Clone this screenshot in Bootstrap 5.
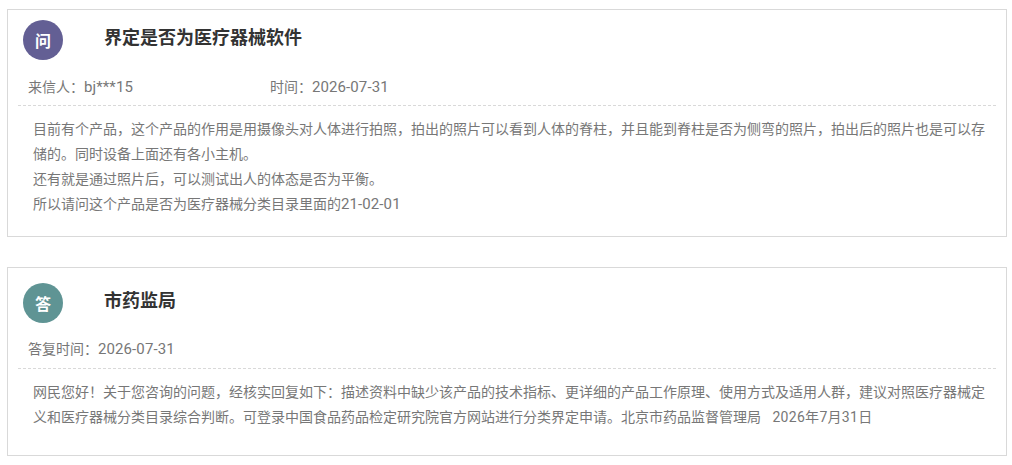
<!DOCTYPE html>
<html lang="zh-CN">
<head>
<meta charset="utf-8">
<title>界定是否为医疗器械软件</title>
<link href="https://cdn.jsdelivr.net/npm/bootstrap@5.3.0/dist/css/bootstrap.min.css" rel="stylesheet">
<style>
body{background:#fff;font-family:"Noto Sans CJK SC","Noto Sans",sans-serif;font-size:14px;color:#666;padding:9px 5px 0 7px}
.qa-box{border:1px solid #d9d9d9;padding:10px 10px 20px}
.qa-box+.qa-box{margin-top:30px;padding-top:15px;padding-bottom:25px}
.qa-box+.qa-box .qa-meta{margin-top:13px;padding-bottom:8px}
.qa-avatar{width:40px;height:40px;margin-left:5px;font-size:16px;font-weight:700;color:#fff}
.qa-ask{background:#635f94}
.qa-ans{background:#5f9494}
.qa-title{font-size:18px;font-weight:700;color:#333;line-height:24px;margin:0 0 8px 41px}
.qa-meta{line-height:24px;margin-top:14px;padding:0 0 7px 10px;border-bottom:1px dashed #d9d9d9;color:#777}
.qa-time{margin-left:137px}
.qa-text{line-height:25px;padding:10px 10px 0 15px;color:#777}
.qa-num{font-family:Roboto,sans-serif;font-size:15px;letter-spacing:.1px;line-height:1}
.qa-date{font-family:Roboto,"Noto Sans CJK SC",sans-serif;letter-spacing:.3px;margin-left:2px}
</style>
</head>
<body>
<section class="qa-box">
  <div class="d-flex align-items-center">
    <div class="qa-avatar qa-ask rounded-circle d-flex align-items-center justify-content-center flex-shrink-0">问</div>
    <h1 class="qa-title">界定是否为医疗器械软件</h1>
  </div>
  <div class="qa-meta d-flex"><span>来信人：<span class="qa-num">bj***15</span></span><span class="qa-time">时间：<span class="qa-num">2026-07-31</span></span></div>
  <div class="qa-text">目前有个产品，这个产品的作用是用摄像头对人体进行拍照，拍出的照片可以看到人体的脊柱，并且能到脊柱是否为侧弯的照片，拍出后的照片也是可以存储的。同时设备上面还有各小主机。<br>还有就是通过照片后，可以测试出人的体态是否为平衡。<br>所以请问这个产品是否为医疗器械分类目录里面的<span class="qa-num">21-02-01</span></div>
</section>
<section class="qa-box">
  <div class="d-flex align-items-center">
    <div class="qa-avatar qa-ans rounded-circle d-flex align-items-center justify-content-center flex-shrink-0">答</div>
    <h1 class="qa-title">市药监局</h1>
  </div>
  <div class="qa-meta d-flex"><span>答复时间：<span class="qa-num">2026-07-31</span></span></div>
  <div class="qa-text">网民您好！关于您咨询的问题，经核实回复如下：描述资料中缺少该产品的技术指标、更详细的产品工作原理、使用方式及适用人群，建议对照医疗器械定义和医疗器械分类目录综合判断。可登录中国食品药品检定研究院官方网站进行分类界定申请。北京市药品监督管理局&nbsp;&nbsp;&nbsp;<span class="qa-date">2026年7月31日</span></div>
</section>
</body>
</html>
